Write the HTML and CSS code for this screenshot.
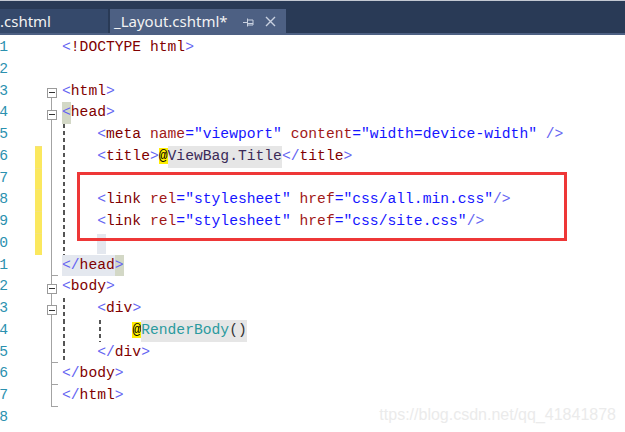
FILE: index.html
```html
<!DOCTYPE html>
<html lang="en">
<head>
  <meta charset="UTF-8">
  <title>_Layout.cshtml</title>
  <link rel="stylesheet" href="styles.css">
</head>
<body>
  <div class="tabbar">
    <div class="tab">.cshtml</div>
    <div class="tab active">
      <span class="tab-name">_Layout.cshtml*</span>
      <svg class="pin" width="11" height="10" viewBox="0 0 11 10">
        <path d="M0 5.5H4M4.5 1.5V9.5M5 3H10V8H5" fill="none" stroke="#c9d1e0" stroke-width="1"/>
        <path d="M5 6.5H10" stroke="#c9d1e0" stroke-width="1"/>
      </svg>
      <svg class="close" width="11" height="11" viewBox="0 0 11 11">
        <path d="M1 1L10 10M10 1L1 10" stroke="#c9d1e0" stroke-width="1.4"/>
      </svg>
    </div>
  </div>

  <div class="editor">
    <div class="row"><span class="ln">1</span><span class="mark"></span><span class="fold"></span><span class="code"><span class="d">&lt;</span><span class="t">!DOCTYPE html</span><span class="d">&gt;</span></span></div>
    <div class="row"><span class="ln">2</span><span class="mark"></span><span class="fold"></span><span class="code"></span></div>
    <div class="row"><span class="ln">3</span><span class="mark"></span><span class="fold start"><i class="box"></i></span><span class="code"><span class="d">&lt;</span><span class="t">html</span><span class="d">&gt;</span></span></div>
    <div class="row"><span class="ln">4</span><span class="mark"></span><span class="fold"><i class="box"></i></span><span class="code"><span class="d hl-match">&lt;</span><span class="t">head</span><span class="d">&gt;</span></span></div>
    <div class="row"><span class="ln">5</span><span class="mark"></span><span class="fold"></span><span class="code guide">    <span class="d">&lt;</span><span class="t">meta</span> <span class="a">name</span><span class="v">="viewport"</span> <span class="a">content</span><span class="v">="width=device-width"</span> <span class="d">/&gt;</span></span></div>
    <div class="row"><span class="ln">6</span><span class="mark on"></span><span class="fold"></span><span class="code guide">    <span class="d">&lt;</span><span class="t">title</span><span class="d">&gt;</span><span class="at">@</span><span class="razor">ViewBag.Title</span><span class="d">&lt;/</span><span class="t">title</span><span class="d">&gt;</span></span></div>
    <div class="row"><span class="ln">7</span><span class="mark on"></span><span class="fold"></span><span class="code guide"></span></div>
    <div class="row"><span class="ln">8</span><span class="mark on"></span><span class="fold"></span><span class="code guide">    <span class="d">&lt;</span><span class="t">link</span> <span class="a">rel</span><span class="v">="stylesheet"</span> <span class="a">href</span><span class="v">="css/all.min.css"</span><span class="d">/&gt;</span></span></div>
    <div class="row"><span class="ln">9</span><span class="mark on"></span><span class="fold"></span><span class="code guide">    <span class="d">&lt;</span><span class="t">link</span> <span class="a">rel</span><span class="v">="stylesheet"</span> <span class="a">href</span><span class="v">="css/site.css"</span><span class="d">/&gt;</span></span></div>
    <div class="row"><span class="ln">10</span><span class="mark on"></span><span class="fold"></span><span class="code guide">    <span class="caret"> </span></span></div>
    <div class="row"><span class="ln">11</span><span class="mark"></span><span class="fold end"></span><span class="code"><span class="hl-tag"><span class="d">&lt;/</span><span class="t">head</span></span><span class="d hl-match">&gt;</span></span></div>
    <div class="row"><span class="ln">12</span><span class="mark"></span><span class="fold"><i class="box"></i></span><span class="code"><span class="d">&lt;</span><span class="t">body</span><span class="d">&gt;</span></span></div>
    <div class="row"><span class="ln">13</span><span class="mark"></span><span class="fold"><i class="box"></i></span><span class="code guide"><span class="d">    &lt;</span><span class="t">div</span><span class="d">&gt;</span></span></div>
    <div class="row"><span class="ln">14</span><span class="mark"></span><span class="fold"></span><span class="code guide guide2">        <span class="at">@</span><span class="method">RenderBody</span><span class="paren">()</span></span></div>
    <div class="row"><span class="ln">15</span><span class="mark"></span><span class="fold end"></span><span class="code guide">    <span class="d">&lt;/</span><span class="t">div</span><span class="d">&gt;</span></span></div>
    <div class="row"><span class="ln">16</span><span class="mark"></span><span class="fold end"></span><span class="code"><span class="d">&lt;/</span><span class="t">body</span><span class="d">&gt;</span></span></div>
    <div class="row"><span class="ln">17</span><span class="mark"></span><span class="fold end last"></span><span class="code"><span class="d">&lt;/</span><span class="t">html</span><span class="d">&gt;</span></span></div>
    <div class="row"><span class="ln">18</span><span class="mark"></span><span class="fold none"></span><span class="code"></span></div>

    <div class="callout"></div>
    <div class="watermark">ttps://blog.csdn.net/qq_41841878</div>
  </div>
</body>
</html>
```
FILE: styles.css
```css
html, body {
  margin: 0;
  background: #fff;
}
body {
  width: 625px;
  height: 432px;
  overflow: hidden;
}

/* tab strip */
.tabbar {
  display: flex;
  align-items: flex-end;
  height: 32px;
  background: #293a56;
  border-top: 1px solid #c3c8d2;
  border-bottom: 2px solid #4d6083;
}
.tab {
  display: flex;
  align-items: center;
  height: 24px;
  width: 108px;
  background: #35496b;
  color: #f2f2f2;
  font-family: "Noto Sans", sans-serif;
  font-size: 15px;
  white-space: nowrap;
  overflow: hidden;
}
.tab.active {
  width: 172px;
  margin-left: 2px;
  padding-left: 4px;
  background: #4d6083;
}
.tab-name {
  width: 129px;
}
.pin {
  margin-top: 1px;
}
.close {
  margin-left: 11px;
}

/* editor */
.editor {
  position: relative;
  height: 395px;
  padding-top: 2px;
  font-family: "Liberation Mono", monospace;
  font-size: 14.67px;
  line-height: 21.75px;
}
.row {
  display: flex;
  height: 21.75px;
}
.ln {
  display: flex;
  justify-content: flex-end;
  width: 8px;
  overflow: hidden;
  color: #2b91af;
  flex: none;
}
.mark {
  width: 7px;
  margin-left: 27px;
  flex: none;
}
.mark.on {
  background: #fbe85e;
  border-top: 1px solid #f5e27a;
}
.fold {
  display: flex;
  align-items: center;
  width: 13px;
  margin-left: 4px;
  flex: none;
  background: linear-gradient(#a3a3a3, #a3a3a3) no-repeat 5px 0 / 1px 100%;
}
.fold.start {
  background-position: 5px 100%;
  background-size: 1px 50%;
}
.fold.end {
  background:
    linear-gradient(#a3a3a3, #a3a3a3) no-repeat 5px 100% / 7px 1px,
    linear-gradient(#a3a3a3, #a3a3a3) no-repeat 5px 0 / 1px 100%;
}
.fold.none,
.row:first-child .fold,
.row:nth-child(2) .fold {
  background: none;
}
.box {
  position: relative;
  width: 8px;
  height: 8px;
  margin-left: 1px;
  margin-top: 3px;
  background: #fff;
  border: 1px solid #9a9a9a;
}
.box::after {
  content: "";
  position: absolute;
  left: 1px;
  right: 1px;
  top: 3.5px;
  height: 1px;
  background: #333;
}
.code {
  margin-left: 3px;
  white-space: pre;
  flex: 1;
  color: #000;
}
.guide {
  background: repeating-linear-gradient(#555 0 4px, transparent 4px 7px) no-repeat 0.5px 0 / 2px 100%;
}
.guide2 {
  background:
    repeating-linear-gradient(#555 0 4px, transparent 4px 7px) no-repeat 37px 0 / 2px 100%,
    repeating-linear-gradient(#555 0 4px, transparent 4px 7px) no-repeat 0.5px 0 / 2px 100%;
}

/* syntax colours */
.d { color: #6464f2; }
.t { color: #800000; }
.a { color: #a01818; }
.v { color: #1515ff; }
.razor {
  display: inline-block;
  vertical-align: top;
  color: #3a2a58;
  background: #e6e6e6;
}
.method {
  display: inline-block;
  vertical-align: top;
  color: #2b9a9e;
  background: #e6e6e6;
}
.paren {
  display: inline-block;
  vertical-align: top;
  color: #333;
  background: #e6e6e6;
}
.at {
  background: #ffee00;
}
.hl-match {
  display: inline-block;
  vertical-align: top;
  background: #d3d8c6;
}
.hl-tag {
  display: inline-block;
  vertical-align: top;
  background: #e4e8ef;
}
.caret {
  display: inline-block;
  vertical-align: top;
  height: 20px;
  margin-top: 1.5px;
  background: #e4e8ef;
}

/* overlays */
.callout {
  position: absolute;
  left: 77px;
  top: 137px;
  width: 490px;
  height: 69px;
  box-sizing: border-box;
  border: 3px solid #ee3737;
}
.watermark {
  position: absolute;
  right: 9px;
  bottom: 7px;
  font-family: "Liberation Sans", Arial, sans-serif;
  font-size: 16px;
  line-height: 20px;
  color: #ebebeb;
}
```
